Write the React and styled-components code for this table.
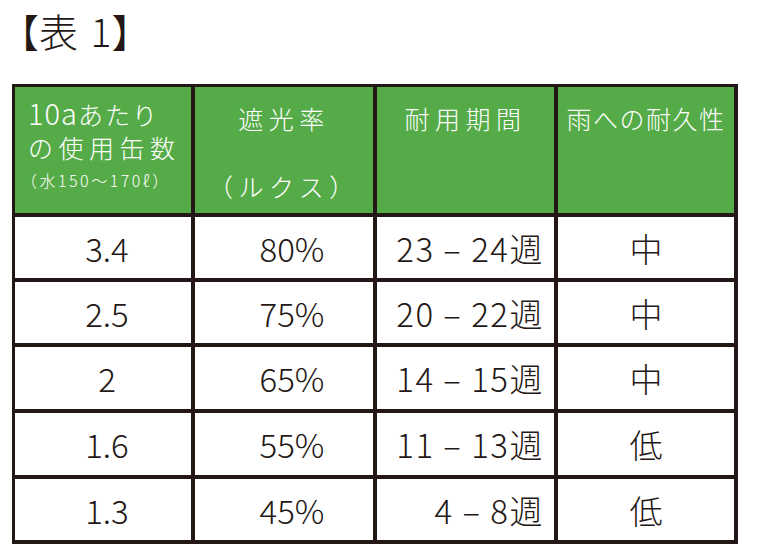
import React from 'react';
import styled, { createGlobalStyle } from 'styled-components';

const GlobalStyle = createGlobalStyle`
  html, body {
    margin: 0;
    padding: 0;
    background: #ffffff;
  }
  body {
    font-family: "Noto Sans CJK JP", "Noto Sans", sans-serif;
    color: #231815;
  }
`;

const Page = styled.div`
  width: 757px;
  height: 553px;
  padding: 8px 0 0 12px;
  box-sizing: border-box;
`;

const Title = styled.h1`
  margin: 0 0 0 -12px;
  height: 76px;
  font-size: 39px;
  line-height: 44px;
  font-weight: 300;
  letter-spacing: 0;
  word-spacing: 4px;
`;

const Table = styled.div`
  display: grid;
  grid-template-columns: 176px 178px 177px 176px;
  grid-template-rows: 126px 61px 61px 62px 62px 61px;
  gap: 4px;
  padding: 3px 4px 4px 3px;
  width: max-content;
  background: #231815;
`;

const HeadCell = styled.div`
  background: #55ab47;
  color: #ffffff;
  font-size: 25px;
  line-height: ${(p) => p.$lh || 34}px;
  letter-spacing: ${(p) => (p.$ls != null ? p.$ls : 5.5)}px;
  font-weight: 300;
  text-align: ${(p) => p.$align || 'center'};
  padding: ${(p) => p.$pad || '14px 0 0 0'};
  white-space: nowrap;
  overflow: hidden;
`;

const HeadLine = styled.div`
  letter-spacing: ${(p) => (p.$ls != null ? `${p.$ls}px` : 'inherit')};
`;

const Latin = styled.span`
  font-size: 29px;
  letter-spacing: 1px;
`;

const Note = styled.div`
  margin: 5px 0 0 -7px;
  font-size: 16px;
  line-height: 22px;
  letter-spacing: 2.5px;
`;

const Cell = styled.div`
  background: #ffffff;
  display: flex;
  align-items: center;
  justify-content: ${(p) => (p.$right ? 'flex-end' : 'center')};
  padding: ${(p) => p.$pad || '0'};
  font-size: 33px;
  font-weight: 300;
  letter-spacing: ${(p) => p.$ls || 0}px;
  color: #231815;
  white-space: nowrap;
`;

const rows = [
  ['3.4', '80%', '23 – 24週', '中'],
  ['2.5', '75%', '20 – 22週', '中'],
  ['2', '65%', '14 – 15週', '中'],
  ['1.6', '55%', '11 – 13週', '低'],
  ['1.3', '45%', '4 – 8週', '低'],
];

export default function App() {
  return (
    <>
      <GlobalStyle />
      <Page>
        <Title>【表 1】</Title>
        <Table>
          <HeadCell $align="left" $pad="9px 0 0 13px" $lh={33}>
            <HeadLine $ls={2}>
              <Latin>10a</Latin>あたり
            </HeadLine>
            <HeadLine>の使用缶数</HeadLine>
            <Note>（水150〜170ℓ）</Note>
          </HeadCell>
          <HeadCell>
            <HeadLine>遮光率</HeadLine>
            <HeadLine>&nbsp;</HeadLine>
            <HeadLine>（ルクス）</HeadLine>
          </HeadCell>
          <HeadCell>耐用期間</HeadCell>
          <HeadCell $ls={1.5}>雨への耐久性</HeadCell>
          {rows.map((r) => (
            <React.Fragment key={r[0]}>
              <Cell $pad="0 0 0 8px">{r[0]}</Cell>
              <Cell $pad="0 0 0 16px">{r[1]}</Cell>
              <Cell $right $ls={1.5} $pad="0 10px 0 0">{r[2]}</Cell>
              <Cell>{r[3]}</Cell>
            </React.Fragment>
          ))}
        </Table>
      </Page>
    </>
  );
}
